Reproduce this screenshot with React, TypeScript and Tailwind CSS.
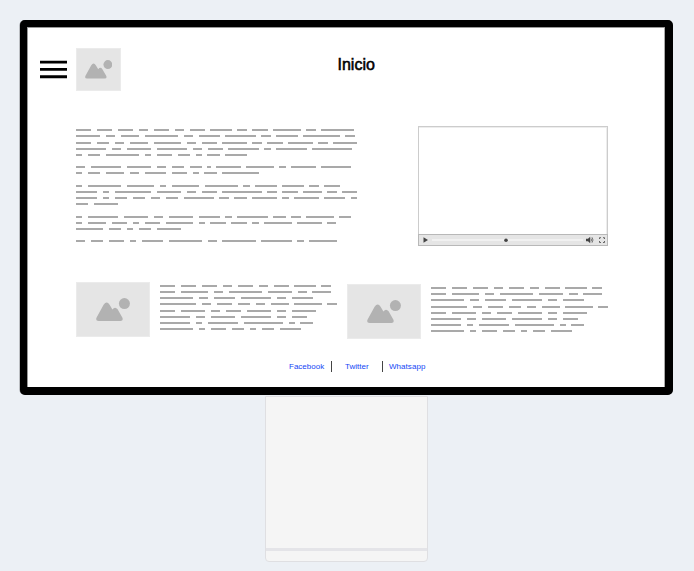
import React from "react";

type Line = { mt: string; words: number[] };

const article: Line[] = [
  { mt: "mt-0", words: [5, 5, 5, 3, 5, 3, 5, 7, 3, 5, 9, 3, 11] },
  { mt: "mt-1", words: [8, 3, 6, 11, 3, 7, 10, 3, 7, 12, 3] },
  { mt: "mt-[5px]", words: [5, 4, 3, 6, 9, 3, 5, 8, 3, 5, 8, 3, 8] },
  { mt: "mt-1", words: [10, 3, 8, 10, 3, 5, 10, 2, 10, 13] },
  { mt: "mt-1", words: [2, 4, 11, 2, 5, 4, 2, 4, 7] },
  { mt: "mt-2.5", words: [3, 10, 8, 3, 4, 4, 1, 8, 9, 2, 8, 10] },
  { mt: "mt-1", words: [2, 4, 6, 3, 7, 5, 2, 4, 12] },
  { mt: "mt-[11px]", words: [2, 11, 9, 2, 9, 11, 2, 7, 7, 3, 5] },
  { mt: "mt-1", words: [7, 2, 12, 8, 3, 5, 13, 3, 5, 6, 3, 5] },
  { mt: "mt-1", words: [7, 2, 4, 4, 3, 4, 10, 3, 4, 8, 2, 8, 7, 2] },
  { mt: "mt-1", words: [4, 8] },
  { mt: "mt-[11px]", words: [2, 10, 8, 3, 8, 7, 2, 10, 4, 3, 9, 4] },
  { mt: "mt-1", words: [2, 6, 5, 2, 5, 9, 2, 5, 5, 2, 9, 8, 3] },
  { mt: "mt-1", words: [9, 4, 2, 4, 8] },
  { mt: "mt-2.5", words: [3, 4, 5, 2, 7, 11, 3, 11, 10, 2, 9] },
];

const summaryWords: number[][] = [
  [5, 5, 5, 3, 5, 3, 5, 7, 3],
  [5, 9, 3, 11, 8, 3, 6],
  [11, 3, 7, 10, 3, 7],
  [12, 3, 5, 4, 3, 6, 9, 3],
  [5, 8, 3, 5, 8, 3, 8],
  [10, 3, 8, 10, 3, 5],
  [10, 2, 10, 13, 2, 4],
  [11, 2, 5, 4, 2, 4, 7],
];

// One row in each summary is a pixel further down than the regular rhythm.
const summary = (wideRow: number): Line[] =>
  summaryWords.map((words, i) => ({
    words,
    mt: i === 0 ? "mt-0" : i === wideRow ? "mt-[5px]" : "mt-1",
  }));

const UNIT = 2.992;

function Greek({ lines }: { lines: Line[] }) {
  return (
    <div className="flex flex-col">
      {lines.map((line, i) => (
        <div key={i} className={`flex h-0.5 gap-[5.484px] ${line.mt}`}>
          {line.words.map((n, j) => (
            <span key={j} className="h-0.5 shrink-0 bg-[#a9a9a9]" style={{ width: n * UNIT + 0.5 }} />
          ))}
        </div>
      ))}
    </div>
  );
}

function Picture({ className, art }: { className: string; art: string }) {
  return (
    <div className={`shrink-0 border border-[#ebebeb] bg-[#e5e5e5] ${className}`}>
      <svg className={art} viewBox="0 0 34 23" fill="#b2b2b2">
        <circle cx="28.4" cy="5.6" r="5.5" />
        <path d="M.6 19.4 7.6 6.8Q10.7 2 13.6 6.8L16.4 11.4Q19 8 21.6 11.3L26.3 19.6Q27.7 23 24.5 23H2.5Q-.8 23 .6 19.4Z" />
      </svg>
    </div>
  );
}

function Video() {
  return (
    <div className="flex h-[120px] w-[190px] flex-col border border-[#cccccc] bg-white">
      <div className="flex-1 shadow-[inset_0_1px_0_#ededed,inset_-1px_0_0_#ededed]" />
      <div className="-mx-px -mb-px flex h-[12px] border border-[#b8b8b8] bg-[#e5e5e5]">
        <svg className="block h-[10px] w-[188px]" viewBox="0 0 188 10">
          <path d="M4.5 2.3 9 5 4.5 7.7Z" fill="#444" />
          <path d="M13 5H164" stroke="#f5f5f5" strokeWidth="1.5" />
          <circle cx="87" cy="5.2" r="1.8" fill="#444" />
          <path d="M167 3.8H169L171.2 1.8V8.2L169 6.2H167Z" fill="#444" />
          <path d="M172 3.5Q173 5 172 6.5M173 2.3Q175 5 173 7.7" fill="none" stroke="#555" strokeWidth=".8" />
          <path d="M180.5 4V2.7H182M184 2.7H185.5V4M185.5 6V7.5H184M182 7.5H180.5V6" fill="none" stroke="#555" strokeWidth=".9" />
        </svg>
      </div>
    </div>
  );
}

function Screen() {
  return (
    <div className="h-[375px] w-[653px] rounded-[5px] border-t-[7px] border-r-8 border-b-8 border-l-[7px] border-black bg-white shadow-[inset_1px_1px_0_#999999,inset_-1px_0_0_#aaaaaa,-0.5px_0_0_#8a8c90]">
      <header className="flex h-[64px] pt-[21px] pl-[13px]">
        <svg className="mt-3 h-5 w-[27px]" viewBox="0 0 27 20">
          <path d="M0 2.1H27M0 9.4H27M0 16.8H27" stroke="#000" strokeWidth="2.9" />
        </svg>
        <Picture className="ml-[9px] h-[43px] w-[45px]" art="mt-[11px] ml-2 h-[18.6px] w-[27.4px]" />
        <h1 className="mt-[6px] ml-[216.5px] text-[16px] leading-[22px] text-black [-webkit-text-stroke:0.55px_black]">Inicio</h1>
      </header>

      <main>
        <section className="flex h-[191px] pl-[49px]">
          <div className="w-[342px] pt-[38px]">
            <Greek lines={article} />
          </div>
          <div className="pt-[35px]">
            <Video />
          </div>
        </section>

        <section className="flex pl-[49px]">
          <Picture className="h-[55px] w-[74px]" art="mt-[15px] ml-[19px] h-[23px] w-[34px]" />
          <div className="ml-[10px] w-[187px] pt-[3px]">
            <Greek lines={summary(4)} />
          </div>
          <Picture className="mt-0.5 h-[55px] w-[74px]" art="mt-[15px] ml-[19px] h-[23px] w-[34px]" />
          <div className="ml-[10px] pt-[5px]">
            <Greek lines={summary(3)} />
          </div>
        </section>
      </main>

      <footer className="mt-[22px] flex h-[11px] pl-[262px] text-[8px] leading-[11px] text-[#1446f5]">
        <a className="w-[42px]">Facebook</a>
        <span className="h-[11px] w-px bg-[#444444]" />
        <a className="ml-[13px] w-[37px]">Twitter</a>
        <span className="h-[11px] w-px bg-[#444444]" />
        <a className="ml-1.5 tracking-[0.05px]">Whatsapp</a>
      </footer>
    </div>
  );
}

export default function App() {
  return (
    <div className="flex h-[571px] w-[694px] flex-col overflow-hidden bg-[#ecf0f5] pt-5 pl-5 font-['Liberation_Sans',Arial,sans-serif]">
      <Screen />
      <div className="mt-px ml-[245px] flex h-[166px] w-[163px] flex-col rounded-b-[4px] border border-[#dfdfe2] bg-[#f5f5f5]">
        <div className="flex-1" />
        <div className="h-[3px] bg-[#e4e4e8]" />
        <div className="h-[10px]" />
      </div>
    </div>
  );
}
